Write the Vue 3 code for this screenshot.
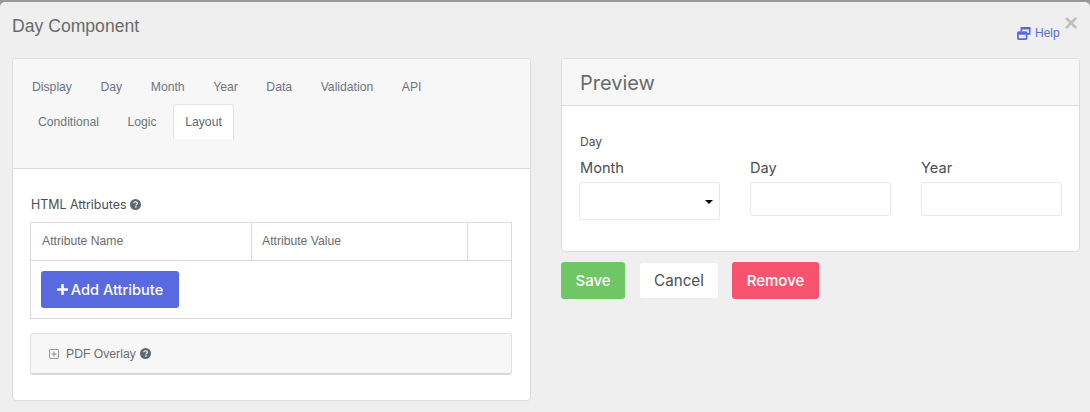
<script setup>
const row1 = ['Display', 'Day', 'Month', 'Year', 'Data', 'Validation', 'API']
const row2 = ['Conditional', 'Logic']
const fields = [
  { label: 'Day', cls: '' },
  { label: 'Year', cls: '' },
]
</script>

<template>
  <div class="page">
    <div class="modal">
      <header class="top">
        <h1 class="title">Day Component</h1>
        <a class="help">
          <svg class="help-icon" viewBox="0 0 16 16" width="14" height="14" aria-hidden="true">
            <path fill="none" stroke="currentColor" stroke-width="2" d="M5 6V2h9.500v7H11" />
            <rect x="1" y="7" width="10" height="8" rx="1" fill="none" stroke="currentColor" stroke-width="2" />
            <path stroke="currentColor" stroke-width="2" d="M1 9h10M5 3h9" />
          </svg>
          Help
        </a>
        <span class="close">×</span>
      </header>

      <div class="columns">
        <section class="card">
          <div class="tabs-head">
            <div class="tab-row">
              <span v-for="t in row1" :key="t" class="tab">{{ t }}</span>
            </div>
            <div class="tab-row second">
              <span v-for="t in row2" :key="t" class="tab">{{ t }}</span>
              <span class="tab active">Layout</span>
            </div>
          </div>
          <div class="tabs-body">
            <div class="attr-label">
              HTML Attributes
              <svg class="q" viewBox="0 0 16 16" width="11" height="11" aria-hidden="true">
                <circle cx="8" cy="8" r="8" fill="#5f6770" />
                <path d="M5.400 6.200C5.500 4.700 6.600 4 8 4c1.500 0 2.700.8 2.700 2.100 0 1.900-2.100 1.800-2.100 3.200" fill="none" stroke="#fff" stroke-width="1.800" />
                <rect x="7.500" y="10.600" width="2.100" height="2" fill="#fff" />
              </svg>
            </div>
            <div class="attr-table">
              <div class="attr-head">
                <div class="cell name">Attribute Name</div>
                <div class="cell value">Attribute Value</div>
                <div class="cell blank"></div>
              </div>
              <div class="attr-foot">
                <button class="btn add" type="button">
                  <svg viewBox="0 0 12 12" width="11" height="11" aria-hidden="true">
                    <path d="M6 1v10M1 6h10" stroke="#fff" stroke-width="2.800" stroke-linecap="round" />
                  </svg>
                  Add Attribute
                </button>
              </div>
            </div>
            <div class="overlay">
              <svg viewBox="0 0 12 12" width="10" height="10" aria-hidden="true">
                <rect x="0.500" y="0.500" width="11" height="11" rx="1.500" fill="none" stroke="#777" />
                <path d="M6 3v6M3 6h6" stroke="#777" />
              </svg>
              <span class="overlay-text">PDF Overlay</span>
              <svg class="q" viewBox="0 0 16 16" width="11" height="11" aria-hidden="true">
                <circle cx="8" cy="8" r="8" fill="#5f6770" />
                <path d="M5.400 6.200C5.500 4.700 6.600 4 8 4c1.500 0 2.700.8 2.700 2.100 0 1.900-2.100 1.800-2.100 3.200" fill="none" stroke="#fff" stroke-width="1.800" />
                <rect x="7.500" y="10.600" width="2.100" height="2" fill="#fff" />
              </svg>
            </div>
          </div>
        </section>

        <div class="right">
          <section class="card preview">
            <div class="preview-head">Preview</div>
            <div class="preview-body">
              <div class="group-label">Day</div>
              <div class="fields">
                <div class="field">
                  <label>Month</label>
                  <div class="select-wrap">
                    <select class="control select"><option></option></select>
                  </div>
                </div>
                <div v-for="f in fields" :key="f.label" class="field">
                  <label>{{ f.label }}</label>
                  <input class="control" type="text" />
                </div>
              </div>
            </div>
          </section>
          <div class="actions">
            <button class="btn save" type="button">Save</button>
            <button class="btn cancel" type="button">Cancel</button>
            <button class="btn remove" type="button">Remove</button>
          </div>
        </div>
      </div>
    </div>
  </div>
</template>

<style>
html, body { margin: 0; background: #efefef; }
</style>

<style scoped>
.page {
  width: 1090px;
  height: 412px;
  background: #999;
  overflow: hidden;
  font-family: "Liberation Sans", Arial, sans-serif;
}
.modal {
  height: 410px;
  margin-top: 2px;
  background: #efefef;
  border-top-left-radius: 5px;
  border-top-right-radius: 5px;
  box-sizing: border-box;
  padding: 0 10px 0 12px;
}
.top {
  height: 56px;
  position: relative;
}
.title {
  margin: 0;
  padding-top: 13px;
  font-size: 17.6px;
  line-height: 22px;
  font-weight: 400;
  color: #6a6a6a;
}
.help {
  position: absolute;
  left: 1005px;
  top: 23px;
  display: flex;
  align-items: center;
  gap: 4px;
  font-size: 12px;
  line-height: 16px;
  color: #5969e2;
}
.close {
  position: absolute;
  left: 1052px;
  top: 8px;
  font-size: 24px;
  line-height: 26px;
  font-weight: 700;
  color: #c0c0c0;
}
.columns {
  display: flex;
  align-items: flex-start;
  gap: 30px;
}
.card {
  width: 519px;
  box-sizing: border-box;
  border: 1px solid #dcdcdc;
  border-radius: 4px;
  background: #fff;
  overflow: hidden;
}
.tabs-head {
  height: 110px;
  box-sizing: border-box;
  padding-top: 10px;
  padding-left: 8px;
  background: #f7f7f7;
  border-bottom: 1px solid #dcdcdc;
}
.tab-row {
  display: flex;
  height: 35px;
  gap: 6.55px;
}
.tab-row.second {
  padding-left: 6px;
}
.tab {
  padding: 0 11px;
  font-size: 12.2px;
  line-height: 35px;
  color: #6c757d;
  border: 1px solid transparent;
  border-bottom: 0;
  margin-left: -1px;
  margin-right: -1px;
}
.tab.active {
  color: #5f6770;
  background: #fff;
  border-color: #e2e2e8;
  border-radius: 4px 4px 0 0;
}
.tabs-body {
  padding: 26px 18px 25px 17px;
}
.attr-label {
  display: flex;
  align-items: center;
  gap: 4px;
  height: 18px;
  padding-left: 1px;
  font-family: Inter, sans-serif;
  font-size: 12.4px;
  color: #4a4f55;
  margin-bottom: 9px;
}
.attr-table {
  border: 1px solid #d9d9d9;
  font-size: 12.2px;
  color: #6c6c6c;
}
.attr-head {
  display: flex;
  height: 38px;
  box-sizing: border-box;
  border-bottom: 1px solid #d9d9d9;
}
.cell {
  box-sizing: border-box;
  padding-left: 10px;
  line-height: 36px;
}
.name { width: 221px; padding-left: 11px; border-right: 1px solid #d9d9d9; }
.value { width: 216px; border-right: 1px solid #d9d9d9; }
.blank { flex: 1; }
.attr-foot {
  padding: 10px;
  height: 57px;
  box-sizing: border-box;
}
.btn {
  border: 0;
  border-radius: 3px;
  box-sizing: border-box;
  height: 37px;
  font-family: Inter, sans-serif;
  font-size: 15px;
  font-weight: 500;
  padding: 0;
}
.add {
  width: 138px;
  font-size: 14.6px;
  background: #5969e0;
  color: #fff;
  display: flex;
  align-items: center;
  justify-content: center;
  gap: 3px;
}
.overlay {
  margin-top: 14px;
  height: 42px;
  box-sizing: border-box;
  background: #f7f7f8;
  border: 1px solid #e0e0e4;
  border-bottom: 2px solid #d6d6dc;
  border-radius: 3px;
  padding-left: 18px;
  display: flex;
  align-items: center;
  font-size: 12.2px;
  color: #6c6c6c;
}
.overlay-text {
  margin: 0 4px 0 7px;
}
.right {
  width: 519px;
}
.preview-head {
  height: 47px;
  box-sizing: border-box;
  background: #f7f7f7;
  border-bottom: 1px solid #dcdcdc;
  padding-left: 18px;
  font-family: Inter, sans-serif;
  font-size: 20px;
  line-height: 48px;
  color: #6a6a6a;
}
.preview-body {
  height: 145px;
  box-sizing: border-box;
  padding: 27px 17px 0 17px;
}
.group-label {
  padding-left: 1px;
  font-family: Inter, sans-serif;
  font-size: 12px;
  line-height: 18px;
  color: #4a4f55;
}
.fields {
  display: flex;
  gap: 30px;
  margin-top: 7px;
}
.field {
  width: 141px;
}
.field label {
  display: block;
  font-family: Inter, sans-serif;
  font-size: 14.6px;
  line-height: 20px;
  color: #4a4f55;
  margin-bottom: 4px;
}
.field:first-child label {
  padding-left: 1px;
}
.control {
  display: block;
  width: 100%;
  height: 34px;
  box-sizing: border-box;
  background: #fff;
  border: 1px solid #e8e8ee;
  border-radius: 3px;
}
.select-wrap {
  position: relative;
}
.select-wrap::after {
  content: "";
  position: absolute;
  right: 7px;
  top: 18px;
  border-left: 4px solid transparent;
  border-right: 4px solid transparent;
  border-top: 4px solid #000;
}
.select {
  height: 38px;
  appearance: none;
}
.actions {
  display: flex;
  margin-top: 10px;
}
.save {
  width: 64px;
  background: #6fc665;
  color: #fff;
}
.cancel {
  width: 80px;
  margin-left: 14px;
  background: #fff;
  color: #4a4f55;
  font-weight: 400;
  font-size: 15.2px;
  border: 1px solid #eee;
}
.remove {
  width: 87px;
  margin-left: 13px;
  background: #f7536f;
  color: #fff;
}
</style>
